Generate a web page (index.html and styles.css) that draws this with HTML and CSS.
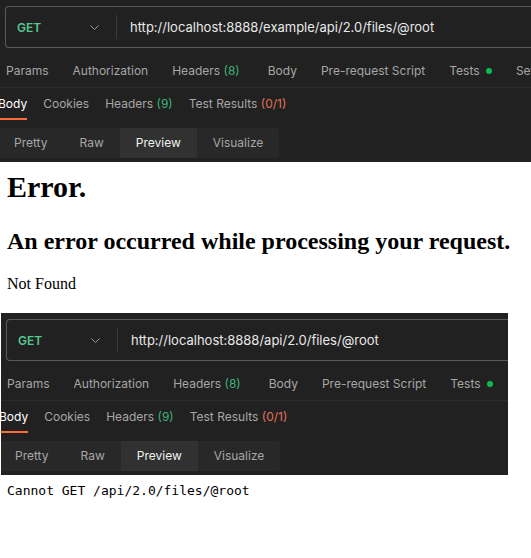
FILE: index.html
```html
<!doctype html>
<html><head>
<meta charset="UTF-8">
<title>Cannot GET /api/2.0/files/@root</title>
<link rel="stylesheet" href="styles.css">
</head>
<body>

<div class="shot">
  <div class="urlbar">
    <span class="method">GET</span>
    <svg class="chev" width="9" height="5" viewBox="0 0 9 5"><polyline points="0.5,0.5 4.5,4.5 8.5,0.5" fill="none" stroke="#9a9a9a" stroke-width="1"/></svg>
    <span class="sep"></span>
    <span class="url">http://localhost:8888/example/api/2.0/files/@root</span>
  </div>
  <div class="tabs req">
    <span>Params</span>
    <span>Authorization</span>
    <span class="hdr">Headers <em class="ok">(8)</em></span>
    <span>Body</span>
    <span>Pre-request Script</span>
    <span>Tests <i class="dot"></i></span>
    <span>Settings</span>
  </div>
  <div class="tabs res">
    <span class="on">Body</span>
    <span>Cookies</span>
    <span>Headers <em class="ok">(9)</em></span>
    <span>Test Results <em class="bad">(0/1)</em></span>
  </div>
  <div class="modes">
    <span>Pretty</span>
    <span>Raw</span>
    <span class="on">Preview</span>
    <span>Visualize</span>
  </div>
</div>

<div class="errpage">
  <h1>Error.</h1>
  <h2>An error occurred while processing your request.</h2>
  <p>Not Found</p>
</div>

<div class="shot second">
  <div class="urlbar">
    <span class="method">GET</span>
    <svg class="chev" width="9" height="5" viewBox="0 0 9 5"><polyline points="0.5,0.5 4.5,4.5 8.5,0.5" fill="none" stroke="#9a9a9a" stroke-width="1"/></svg>
    <span class="sep"></span>
    <span class="url">http://localhost:8888/api/2.0/files/@root</span>
  </div>
  <div class="tabs req">
    <span>Params</span>
    <span>Authorization</span>
    <span class="hdr">Headers <em class="ok">(8)</em></span>
    <span>Body</span>
    <span>Pre-request Script</span>
    <span>Tests <i class="dot"></i></span>
    <span>Settings</span>
  </div>
  <div class="tabs res">
    <span class="on">Body</span>
    <span>Cookies</span>
    <span>Headers <em class="ok">(9)</em></span>
    <span>Test Results <em class="bad">(0/1)</em></span>
  </div>
  <div class="modes">
    <span>Pretty</span>
    <span>Raw</span>
    <span class="on">Preview</span>
    <span>Visualize</span>
  </div>
</div>

<pre class="plain">Cannot GET /api/2.0/files/@root</pre>

</body>
</html>
```

FILE: styles.css
```css
body {
    margin: 0;
    background: #fff;
    color: #000;
    font-family: "Liberation Serif", serif;
}

/* postman panels */
.shot {
    height: 162px;
    overflow: hidden;
    background: #212121;
    font-family: Inter, "Liberation Sans", sans-serif;
    font-size: 12px;
    color: #a6a6a6;
}
.shot.second {
    margin-left: 1px;
    width: 507px;
}
.urlbar {
    box-sizing: border-box;
    display: flex;
    align-items: center;
    width: 700px;
    height: 42px;
    margin: 6px 0 0 5px;
    border: 1px solid #5a5a5a;
    border-right: none;
    border-radius: 4px 0 0 4px;
    white-space: nowrap;
}
.method {
    width: 73px;
    padding-left: 11px;
    font-weight: 600;
    font-size: 12px;
    color: #55c68e;
}
.chev {
    display: block;
}
.sep {
    width: 1px;
    height: 24px;
    margin-left: 17px;
    background: #3a3a3a;
}
.url {
    margin-left: 13px;
    font-size: 13px;
    color: #e8e8e8;
}
.tabs {
    box-sizing: border-box;
    display: flex;
    white-space: nowrap;
}
.tabs em {
    font-style: normal;
}
.tabs .ok {
    color: #3cb37a;
}
.tabs .bad {
    color: #e0715a;
}
.req {
    height: 40px;
    padding: 5px 0 0 6px;
    gap: 24px;
    align-items: center;
    border-bottom: 1px solid #2c2c2c;
}
.req .hdr {
    margin-right: 4px;
}
.dot {
    display: inline-block;
    width: 6px;
    height: 6px;
    margin-left: 3px;
    border-radius: 50%;
    background: #0cbb52;
    vertical-align: 1px;
}
.res {
    height: 32px;
    margin-left: -2px;
    gap: 16px;
}
.res span {
    display: block;
    line-height: 30px;
    padding-top: 1px;
    border-bottom: 2px solid transparent;
}
.res .on {
    color: #fff;
    border-bottom-color: #ff6c37;
}
.modes {
    display: inline-flex;
    height: 30px;
    margin: 8px 0 0 -2px;
    background: #282828;
    border-radius: 4px;
    overflow: hidden;
}
.modes span {
    padding: 0 16px;
    line-height: 30px;
}
.modes .on {
    background: #313131;
    color: #f0f0f0;
}

/* html error page */
.errpage {
    height: 151px;
    padding: 0 7px;
    overflow: hidden;
}
.errpage h1 {
    margin: 8px 0 0;
    font-size: 30px;
}
.errpage h2 {
    margin: 24px 0 0;
    font-size: 24px;
}
.errpage p {
    margin: 20px 0 0;
    font-size: 16px;
}
.plain {
    margin: 8px 7px;
    font-family: "DejaVu Sans Mono", monospace;
    font-size: 13px;
}
```
